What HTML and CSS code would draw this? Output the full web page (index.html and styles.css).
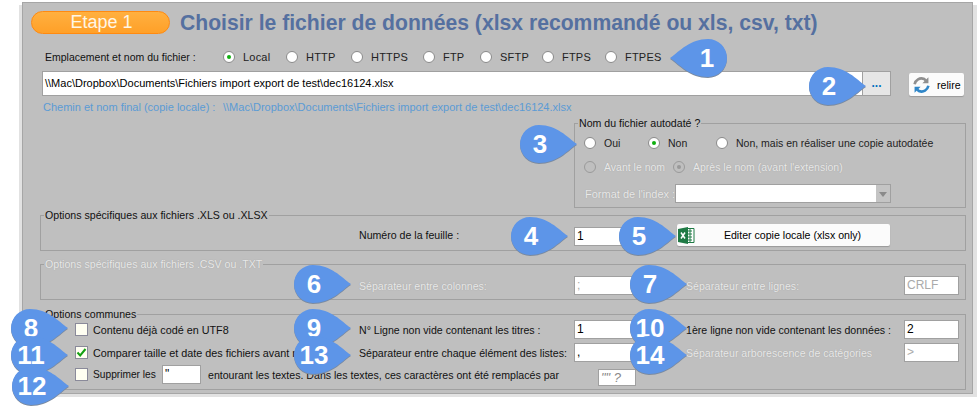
FILE: index.html
```html
<!DOCTYPE html>
<html lang="fr">
<head>
<meta charset="utf-8">
<title>Etape 1</title>
<link rel="stylesheet" href="styles.css">
</head>
<body>
<svg class="defs" width="0" height="0" aria-hidden="true">
  <symbol id="drop" viewBox="0 0 57 38">
    <path d="M57 19C47 12 37 0 19 0A19 19 0 0 0 19 38C37 38 47 26 57 19Z"/>
  </symbol>
</svg>
<main class="panel">
  <header class="head">
    <div class="pill">Etape 1</div>
    <h1 class="title">Choisir le fichier de données (xlsx recommandé ou xls, csv, txt)</h1>
  </header>

  <div class="source">
    <span>Emplacement et nom du fichier :</span>
    <label class="radio"><i class="dot on"></i>Local</label>
    <label class="radio"><i class="dot"></i>HTTP</label>
    <label class="radio"><i class="dot"></i>HTTPS</label>
    <label class="radio"><i class="dot"></i>FTP</label>
    <label class="radio"><i class="dot"></i>SFTP</label>
    <label class="radio"><i class="dot"></i>FTPS</label>
    <label class="radio"><i class="dot"></i>FTPES</label>
  </div>

  <div class="pathrow">
    <div class="pathfield">\\Mac\Dropbox\Documents\Fichiers import export de test\dec16124.xlsx</div>
    <div class="browse">...</div>
    <div class="btn relire">
      <svg width="19" height="18" viewBox="0 0 22 20" aria-hidden="true">
        <path d="M3 9C4 4 9 1 14 3L16 5" fill="none" stroke="#8f8f8f" stroke-width="3"/>
        <path d="M19 1V8H12Z" fill="#8f8f8f"/>
        <path d="M19 11C18 16 13 19 8 17L6 15" fill="none" stroke="#2f86c8" stroke-width="3"/>
        <path d="M3 19V12H10Z" fill="#2f86c8"/>
      </svg>
      <span>relire</span>
    </div>
  </div>

  <div class="finalpath">
    <span class="finalname">Chemin et nom final (copie locale) :</span>
    <span>\\Mac\Dropbox\Documents\Fichiers import export de test\dec16124.xlsx</span>
  </div>

  <section class="group auto">
    <span class="legend">Nom du fichier autodaté ?</span>
    <div class="autoline first">
      <label class="radio w64"><i class="dot"></i>Oui</label>
      <label class="radio w68"><i class="dot on"></i>Non</label>
      <label class="radio"><i class="dot"></i>Non, mais en réaliser une copie autodatée</label>
    </div>
    <div class="autoline second off">
      <label class="radio w89"><i class="dot dis"></i>Avant le nom</label>
      <label class="radio"><i class="dot dis sel"></i>Après le nom (avant l'extension)</label>
    </div>
    <div class="autoline third off">
      <span class="fmtlabel">Format de l'index :</span>
      <div class="combo"><b class="arrow"></b></div>
    </div>
  </section>

  <section class="group xls">
    <span class="legend">Options spécifiques aux fichiers .XLS ou .XLSX</span>
    <div class="xlsrow">
      <span>Numéro de la feuille :</span>
      <div class="field end">1</div>
      <div class="btn edit">
        <svg width="17" height="17" viewBox="0 0 17 17" aria-hidden="true">
          <path d="M8 1.500H16V15.500H8" fill="#fff" stroke="#1f7a45"/>
          <path d="M10 4H14M10 7H14M10 10H14M10 13H14M12 2V15" stroke="#1f7a45" fill="none"/>
          <path d="M0 2L10 0V17L0 15Z" fill="#1f7a45"/>
          <path d="M3 5.500L7 11.500M7 5.500L3 11.500" stroke="#fff" stroke-width="1.500" fill="none"/>
        </svg>
        <span>Editer copie locale (xlsx only)</span>
      </div>
    </div>
  </section>

  <section class="group csv off">
    <span class="legend">Options spécifiques aux fichiers .CSV ou .TXT</span>
    <div class="grid csvrow">
      <span class="col2">Séparateur entre colonnes:</span>
      <div class="field dim">;</div>
      <span>Séparateur entre lignes:</span>
      <div class="field dim">CRLF</div>
    </div>
  </section>

  <section class="group common">
    <span class="legend">Options communes</span>
    <div class="grid row1">
      <label class="check"><i class="box"></i>Contenu déjà codé en UTF8</label>
      <span>N° Ligne non vide contenant les titres :</span>
      <div class="field">1</div>
      <span>1ère ligne non vide contenant les données :</span>
      <div class="field">2</div>
    </div>
    <div class="grid row2">
      <label class="check"><i class="box">
        <svg width="11" height="11" viewBox="0 0 11 11" aria-hidden="true"><path d="M1.500 5.500L4.200 8.500L9.500 2" fill="none" stroke="#12a012" stroke-width="2"/></svg>
      </i>Comparer taille et date des fichiers avant re</label>
      <span>Séparateur entre chaque élément des  listes:</span>
      <div class="field">,</div>
      <span class="offtext">Séparateur arborescence de catégories</span>
      <div class="field dim">&gt;</div>
    </div>
    <div class="row3">
      <label class="check"><i class="box"></i>Supprimer les</label>
      <div class="field quote">"</div>
      <span class="surround">entourant les textes. Dans les textes, ces caractères ont été remplacés par</span>
      <div class="field replaced">"" ?</div>
    </div>
  </section>
</main>

<div class="call c1 flip"><svg><use href="#drop"/></svg><b>1</b></div>
<div class="call c2"><svg><use href="#drop"/></svg><b>2</b></div>
<div class="call c3"><svg><use href="#drop"/></svg><b>3</b></div>
<div class="call c4"><svg><use href="#drop"/></svg><b>4</b></div>
<div class="call c5"><svg><use href="#drop"/></svg><b>5</b></div>
<div class="call c6"><svg><use href="#drop"/></svg><b>6</b></div>
<div class="call c7"><svg><use href="#drop"/></svg><b>7</b></div>
<div class="call c8"><svg><use href="#drop"/></svg><b>8</b></div>
<div class="call c9"><svg><use href="#drop"/></svg><b>9</b></div>
<div class="call c10"><svg><use href="#drop"/></svg><b>10</b></div>
<div class="call c11"><svg><use href="#drop"/></svg><b>11</b></div>
<div class="call c12"><svg><use href="#drop"/></svg><b>12</b></div>
<div class="call c13"><svg><use href="#drop"/></svg><b>13</b></div>
<div class="call c14"><svg><use href="#drop"/></svg><b>14</b></div>
</body>
</html>
```
FILE: styles.css
```css
* { box-sizing: border-box; }
html, body { margin: 0; padding: 0; background: #fff; }
body {
  position: relative;
  width: 977px;
  height: 409px;
  overflow: hidden;
  font: 10.6px/14px "Liberation Sans", Arial, sans-serif;
  color: #111;
  padding: 2px 0 0 22px;
}
.defs { position: absolute; }

.panel {
  width: 951px;
  height: 392px;
  background: #bfbfbf;
  border: 1px solid #a6a6a6;
  box-shadow: -3px 3px 0 #e2e2e2, 4px 3px 0 #e2e2e2;
  display: flex;
  flex-direction: column;
}

.head { display: flex; align-items: center; gap: 10px; margin: 8px 0 0 8px; height: 23px; }
.pill {
  width: 139px;
  height: 23px;
  border: 1px solid #ff8a10;
  border-radius: 12px;
  background: linear-gradient(#ffb040, #ffa028);
  color: #fff6e6;
  font-size: 18px;
  line-height: 21px;
  text-align: center;
  padding-left: 2px;
}
.title {
  margin: 0;
  font-size: 21.15px;
  line-height: 23px;
  font-weight: bold;
  color: #5570a0;
  white-space: nowrap;
}

.source {
  display: grid;
  grid-template-columns: 178px 63px 65px 72px 57px 62px 63px auto;
  align-items: center;
  height: 18px;
  margin: 14px 0 0 22px;
  white-space: nowrap;
  font-size: 10.5px;
}
.radio { display: flex; flex: none; align-items: center; gap: 8px; white-space: nowrap; color: #222; font-size: 10.5px; }
.source .radio { font-size: 11px; letter-spacing: .2px; }
.dot {
  flex: none;
  position: relative;
  display: block;
  width: 12px;
  height: 12px;
  border-radius: 50%;
  background: #fff;
  border: 1px solid #8a8a8a;
}
.dot.on::after, .dot.sel::after {
  content: "";
  position: absolute;
  left: 3px;
  top: 3px;
  width: 4px;
  height: 4px;
  border-radius: 50%;
  background: #10b010;
}
.dot.dis { background: #bfbfbf; border-color: #9a9a9a; }
.dot.sel::after { background: #999; }

.pathrow { display: flex; margin: 5px 0 0 19px; height: 25px; }
.pathfield {
  width: 820px;
  height: 25px;
  background: #fff;
  border: 1px solid #a0a0a0;
  border-right: 0;
  padding: 0 2px;
  font-size: 11px;
  line-height: 23px;
  color: #000;
}
.browse {
  width: 29px;
  height: 25px;
  background: #e6e6e6;
  border: 1px solid #a0a0a0;
  color: #0070c0;
  font-size: 12px;
  font-weight: bold;
  text-align: center;
  line-height: 23px;
}
.btn {
  display: flex;
  align-items: center;
  background: #fbfbfb;
  border-radius: 2px;
  box-shadow: 0 1px 1px #999;
  color: #000;
}
.relire { width: 55px; height: 23px; margin: 2px 0 0 18px; padding-left: 3px; gap: 6px; }

.finalpath { display: flex; margin: 4px 0 0 20px; height: 14px; color: #5b9bd5; white-space: nowrap; font-size: 11px; }
.finalname { width: 180px; }

.group { position: relative; border: 1px solid #a0a0a0; margin-left: 17px; width: 926px; }
.legend { position: absolute; left: 3px; top: -8px; background: #bfbfbf; padding: 0 1px; white-space: nowrap; color: #111; }

.auto { margin: 9px 0 0 551px; width: 392px; height: 85px; }
.autoline { display: flex; align-items: center; }
.autoline.first { margin: 12px 0 0 9px; height: 14px; }
.autoline.second { margin: 10px 0 0 9px; height: 14px; }
.autoline.third { margin: 10px 0 0 12px; height: 19px; }
.w64 { width: 64px; }
.w68 { width: 68px; }
.w89 { width: 89px; }
.fmtlabel { width: 88px; margin-left: -2px; margin-right: 2px; font-size: 11px; white-space: nowrap; }
.combo { position: relative; width: 216px; height: 19px; background: #fff; border: 1px solid #a0a0a0; }
.arrow {
  position: absolute;
  right: 0;
  top: 0;
  width: 14px;
  height: 17px;
  background: #c4c4c4;
}
.arrow::after {
  content: "";
  position: absolute;
  left: 3px;
  top: 7px;
  border: 4px solid transparent;
  border-top: 5px solid #8a8a8a;
}

.off, .off .legend, .off .radio, .offtext {
  color: #e9e9e9;
  text-shadow: 0 0 1px #999;
}

.xls { margin-top: 7px; height: 36px; }
.xlsrow {
  display: grid;
  grid-template-columns: 215px 103px 213px;
  align-items: center;
  height: 22px;
  margin: 8px 0 0 318px;
}
.field {
  height: 19px;
  background: #fff;
  border: 1px solid #a0a0a0;
  padding: 0 2px;
  font-size: 12px;
  line-height: 17px;
  color: #000;
  white-space: nowrap;
  overflow: hidden;
}
.field.end { align-self: end; width: 66px; }
.field.dim { color: #aaa; text-shadow: none; }
.edit { height: 22px; padding-left: 1px; }
.edit span { flex: 1; text-align: center; }

.grid {
  display: grid;
  grid-template-columns: 318px 215px 112px 218px 55px;
  align-items: center;
  height: 19px;
  white-space: nowrap;
}
.grid .field:nth-of-type(1) { width: 66px; }
.csv { margin-top: 13px; height: 36px; }
.csvrow { margin-top: 11px; }
.col2 { grid-column: 2; }
.common { margin-top: 14px; height: 76px; }
.row1 { margin-top: 5px; }
.row2 { margin-top: 4px; }
.check { display: flex; align-items: center; gap: 5px; margin-left: 34px; white-space: nowrap; color: #111; font-size: 10.8px; }
.box {
  flex: none;
  display: block;
  width: 13px;
  height: 13px;
  background: #fffff2;
  border: 1px solid #8a8a9a;
  overflow: hidden;
}
.box svg { display: block; }
.row3 { display: flex; align-items: flex-start; height: 21px; margin-top: 3px; white-space: nowrap; }
.row3 .check { width: 87px; height: 19px; font-size: 10.2px; }
.quote { width: 39px; }
.surround { margin: 3px 0 0 7px; width: 390px; }
.replaced { width: 38px; height: 17px; margin-top: 4px; font-size: 13px; line-height: 15px; color: #888; font-style: italic; }

.call { position: absolute; width: 57px; height: 38px; }
.call svg { display: block; width: 57px; height: 38px; fill: #5d95e8; filter: drop-shadow(0 1px 0 #7a8aa0); }
.call b {
  position: absolute;
  left: 0;
  top: 0;
  width: 40px;
  text-align: center;
  color: #fff;
  font-size: 26px;
  line-height: 38px;
  font-weight: bold;
}
.flip svg { transform: scaleX(-1); }
.flip b { left: 17px; }
.c1 { left: 670px; top: 39px; }
.c2 { left: 809px; top: 67px; }
.c3 { left: 520px; top: 125px; }
.c4 { left: 511px; top: 217px; }
.c5 { left: 619px; top: 217px; }
.c6 { left: 294px; top: 265px; }
.c7 { left: 630px; top: 265px; }
.c8 { left: 11px; top: 309px; }
.c9 { left: 294px; top: 309px; }
.c10 { left: 630px; top: 309px; }
.c11 { left: 11px; top: 336px; }
.c13 { left: 294px; top: 336px; }
.c14 { left: 630px; top: 336px; }
.c12 { left: 12px; top: 367px; }
```
